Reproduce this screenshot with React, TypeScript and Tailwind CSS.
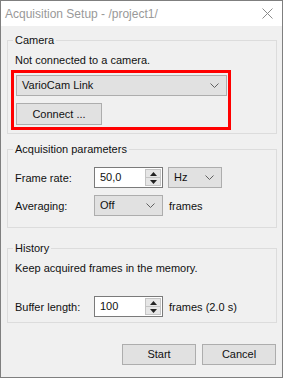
import React from 'react';

const Chevron = () => (
  <svg width="9" height="5" viewBox="0 0 9 5" className="shrink-0">
    <path d="M0.5 0.5 L4.5 4.5 L8.5 0.5" fill="none" stroke="#606060" strokeWidth="1" />
  </svg>
);

function Combo({ value, className = '' }: { value: string; className?: string }) {
  return (
    <div
      className={`flex items-center justify-between h-[21px] bg-[#e1e1e1] border border-[#adadad] pl-[5px] pr-[7px] ${className}`}
    >
      <span className="leading-[19px]">{value}</span>
      <Chevron />
    </div>
  );
}

function Spin({ value }: { value: string }) {
  return (
    <div className="flex h-[21px] w-[69px] bg-white border border-[#7a7a7a]">
      <span className="flex-1 pl-[5px] leading-[19px]">{value}</span>
      <div className="flex flex-col w-[17px] py-[1px] pr-[1px]">
        <div className="flex-1 flex items-center justify-center bg-[#e6e6e6] border border-[#c4c4c4]">
          <svg width="7" height="4" viewBox="0 0 7 4">
            <path d="M3.5 0 L7 4 L0 4 Z" fill="#222" />
          </svg>
        </div>
        <div className="flex-1 flex items-center justify-center bg-[#e6e6e6] border border-t-0 border-[#c4c4c4]">
          <svg width="7" height="4" viewBox="0 0 7 4">
            <path d="M0 0 L7 0 L3.5 4 Z" fill="#222" />
          </svg>
        </div>
      </div>
    </div>
  );
}

function Button({ label, className = '' }: { label: string; className?: string }) {
  return (
    <button
      className={`h-[21px] bg-[#e1e1e1] border border-[#adadad] leading-[19px] text-center ${className}`}
    >
      {label}
    </button>
  );
}

function Group({ title, className = '', children }: { title: string; className?: string; children: React.ReactNode }) {
  return (
    <fieldset className={`border border-[#dcdcdc] px-[3px] ${className}`}>
      <legend className="ml-[2px] px-[2px] leading-[16px]">{title}</legend>
      {children}
    </fieldset>
  );
}

export default function App() {
  return (
    <div className="w-[283px] h-[378px] flex flex-col border border-[#7f7f7f] bg-[#f0f0f0] text-[11px] text-[#111] font-['Liberation_Sans',Arial,sans-serif]">
      {/* title bar */}
      <div className="h-[25px] shrink-0 flex items-center justify-between bg-white pl-[4px] pr-[9px]">
        <span className="text-[#999999] text-[12px] leading-[16px]">Acquisition Setup - /project1/</span>
        <svg width="11" height="11" viewBox="0 0 11 11">
          <path d="M0.5 0.5 L10.5 10.5 M10.5 0.5 L0.5 10.5" stroke="#8a8a8a" strokeWidth="1" />
        </svg>
      </div>

      <div className="flex flex-col pl-[6px] pr-[5px] pt-[6px]">
        <Group title="Camera" className="pb-[3px]">
          <div className="mt-[4px] pl-[4px] leading-[16px]">Not connected to a camera.</div>
          <div className="mt-[2px] w-[220px] border-[3px] border-[#ff0000] pl-[2px] pt-[2px] pb-[2px]">
            <Combo value="VarioCam Link" className="w-[211px]" />
            <Button label="Connect ..." className="mt-[7px] w-[86px] h-[22px]" />
          </div>
        </Group>

        <Group title="Acquisition parameters" className="mt-[7px] pb-[11px]">
          <div className="mt-[10px] flex items-center">
            <span className="w-[83px] pl-[4px] leading-[16px]">Frame rate:</span>
            <Spin value="50,0" />
            <Combo value="Hz" className="ml-[5px] w-[54px]" />
          </div>
          <div className="mt-[7px] flex items-center">
            <span className="w-[83px] pl-[4px] leading-[16px]">Averaging:</span>
            <Combo value="Off" className="w-[69px]" />
            <span className="ml-[6px] leading-[16px]">frames</span>
          </div>
        </Group>

        <Group title="History" className="mt-[12px] pb-[5px]">
          <div className="mt-[4px] pl-[4px] leading-[16px]">Keep acquired frames in the memory.</div>
          <div className="mt-[20px] flex items-center">
            <span className="w-[83px] pl-[4px] leading-[16px]">Buffer length:</span>
            <Spin value="100" />
            <span className="ml-[6px] leading-[16px]">frames (2.0 s)</span>
          </div>
        </Group>

        <div className="mt-[21px] mr-[1px] flex justify-end gap-[6px]">
          <Button label="Start" className="w-[74px]" />
          <Button label="Cancel" className="w-[74px]" />
        </div>
      </div>
    </div>
  );
}
